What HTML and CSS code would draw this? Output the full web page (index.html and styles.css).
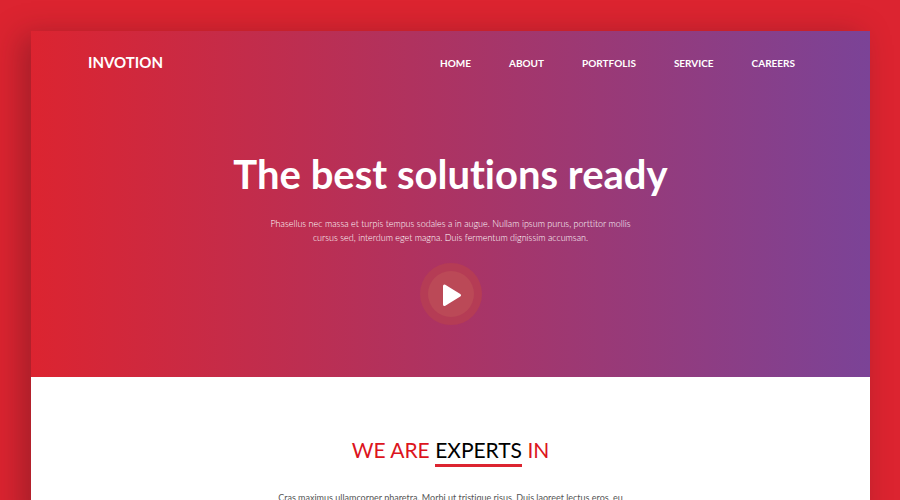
FILE: index.html
```html
<!DOCTYPE html>
<html lang="en">
<head>
<meta charset="utf-8">
<title>Invotion</title>
<meta name="viewport" content="width=device-width, initial-scale=1">
<link rel="stylesheet" href="styles.css">
</head>
<body>
<div class="page">
  <div class="hero">
    <header class="topbar">
      <a class="brand" href="#">INVOTION</a>
      <nav class="menu">
        <a href="#">HOME</a>
        <a href="#">ABOUT</a>
        <a href="#">PORTFOLIS</a>
        <a href="#">SERVICE</a>
        <a href="#">CAREERS</a>
      </nav>
    </header>
    <section class="intro">
      <h1>The best solutions ready</h1>
      <p>Phasellus nec massa et turpis tempus sodales a in augue. Nullam ipsum purus, porttitor mollis<br>cursus sed, interdum eget magna. Duis fermentum dignissim accumsan.</p>
      <button class="play" type="button" aria-label="Play video">
        <svg viewBox="0 0 62 62" aria-hidden="true">
          <circle class="ring" cx="31" cy="31" r="31"/>
          <circle class="disc" cx="31" cy="31" r="23"/>
          <path class="arrow" d="M24.500 23V41.500L39.500 32.250Z"/>
        </svg>
      </button>
    </section>
  </div>
  <section class="experts">
    <h2>WE ARE <span>EXPERTS</span> IN</h2>
    <p>Cras maximus ullamcorper pharetra. Morbi ut tristique risus. Duis laoreet lectus eros, eu</p>
  </section>
</div>
</body>
</html>
```
FILE: styles.css
```css
* {
  box-sizing: border-box;
}

html {
  background: #dc2430;
  scrollbar-width: none;
}

body {
  margin: 0;
  padding: 31px 30px 0 31px;
  font-family: Lato, "Liberation Sans", sans-serif;
  font-variant-ligatures: none;
}

.page {
  background: #fff;
  box-shadow: -10px 4px 28px rgba(60, 20, 30, 0.34);
}

.hero {
  padding-bottom: 52px;
  background: linear-gradient(90deg, #dc2430, #7b4397);
  color: #fff;
}

.topbar {
  display: flex;
  align-items: center;
  justify-content: space-between;
  padding: 20px 75px 0 57px;
}

.topbar a {
  color: inherit;
  text-decoration: none;
}

.brand {
  font-size: 15px;
  font-weight: 700;
  line-height: 22px;
}

.menu {
  display: flex;
  gap: 38px;
  padding-top: 2px;
  font-size: 10px;
  font-weight: 700;
  line-height: 20px;
}

.intro {
  display: flex;
  flex-direction: column;
  align-items: center;
  padding-top: 76px;
  text-align: center;
}

.intro h1 {
  margin: 0;
  font-size: 40px;
  font-weight: 700;
  line-height: 50px;
}

.intro p {
  margin: 18px 0;
  font-size: 9px;
  font-weight: 300;
  line-height: 14px;
}

.play {
  width: 62px;
  height: 62px;
  padding: 0;
  border: 0;
  border-radius: 50%;
  background: none;
  cursor: pointer;
}

.play svg {
  display: block;
  width: 100%;
}

.ring {
  fill: #b53c55;
}

.disc {
  fill: #bb4957;
}

.arrow {
  fill: #fff;
  stroke: #fff;
  stroke-width: 3;
  stroke-linejoin: round;
}

.experts {
  padding: 59px 20px 20px;
  text-align: center;
}

.experts h2 {
  margin: 0 0 24px;
  color: #dc1420;
  font-size: 21px;
  font-weight: 400;
  line-height: 28px;
}

.experts h2 span {
  display: inline-block;
  border-bottom: 3px solid #dc2430;
  color: #000;
}

.experts p {
  margin: 0;
  color: #555;
  font-size: 9px;
  line-height: 14px;
}
```
